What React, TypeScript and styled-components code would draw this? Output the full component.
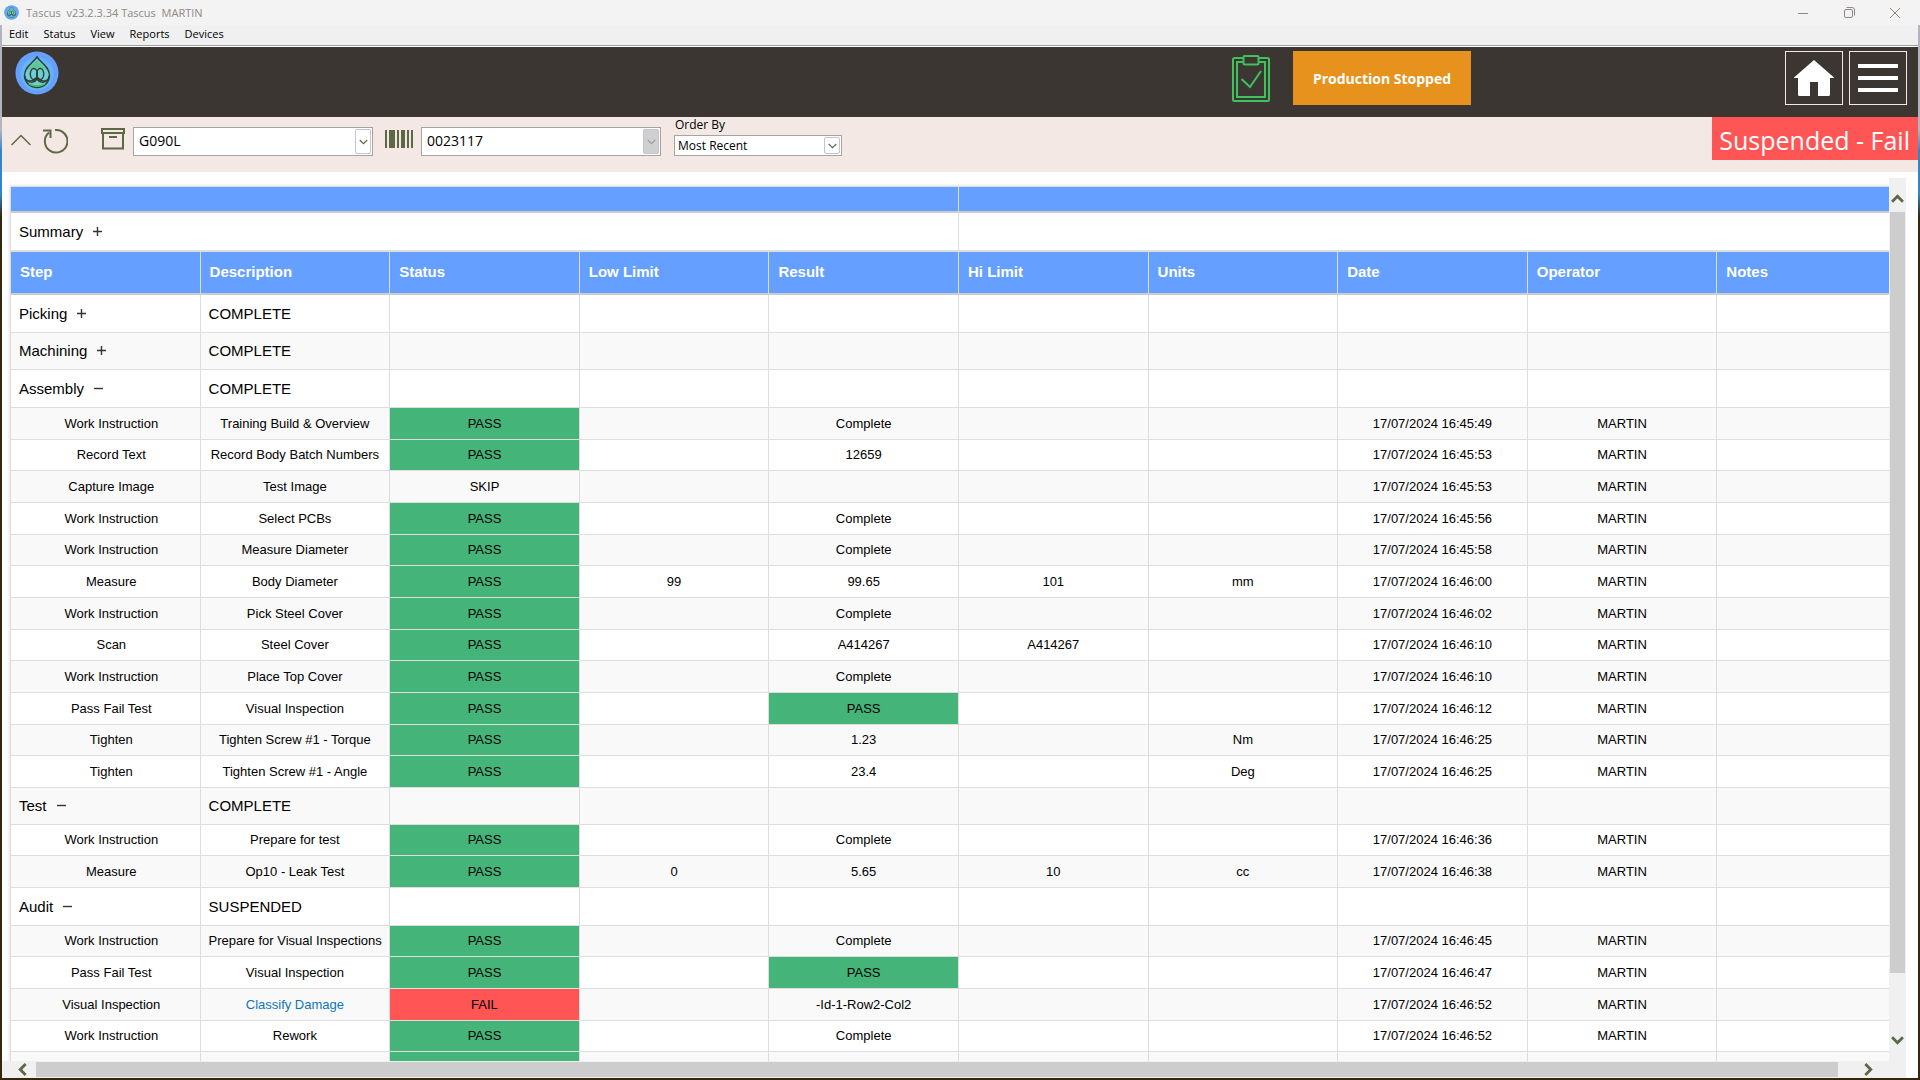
import React, { useState } from "react";
import styled, { createGlobalStyle, css } from "styled-components";

const ui = `"Open Sans", "Noto Sans", sans-serif`;
const grid = `"Liberation Sans", Arial, sans-serif`;
const olive = "#5d6846";

const GlobalStyle = createGlobalStyle`
  *, *::before, *::after { box-sizing: border-box; }
  html, body, #root { height: 100%; }
  body { margin: 0; overflow: hidden; background: #2f2710; font-family: ${ui}; color: #000; }
  button, select { font: inherit; color: inherit; }
`;

const Desktop = styled.div`
  height: 100vh;
  display: flex;
  flex-direction: column;
  background: linear-gradient(#b4b4c0 0 12%, #2f86c9 14% 18%, #33280c 20% 100%);
`;

const TitleBar = styled.header`
  flex: none;
  height: 25px;
  display: flex;
  align-items: center;
  justify-content: space-between;
  padding: 0 2px 0 4px;
  background: #f3f3f3;
`;

const Title = styled.h1`
  margin: 0;
  display: flex;
  align-items: center;
  gap: 7px;
  font-size: 11px;
  line-height: 16px;
  font-weight: 400;
  color: #8f8981;
  white-space: pre;
`;

const WindowButtons = styled.div`
  display: flex;
`;

const WindowButton = styled.button`
  width: 46px;
  height: 22px;
  padding: 0;
  border: 0;
  background: none;
  display: grid;
  place-items: center;
  color: #8f8981;
`;

const Window = styled.div`
  flex: 1;
  min-height: 0;
  margin: 0 2px 2px;
  display: flex;
  flex-direction: column;
  background: #fff;
`;

const MenuBar = styled.nav`
  flex: none;
  height: 21px;
  display: flex;
  align-items: flex-start;
  gap: 15px;
  margin-bottom: 1px;
  padding-left: 7px;
  background: #f0f0f0;
  border-bottom: 1px solid #a0a0a0;
`;

const MenuItem = styled.button`
  padding: 0;
  border: 0;
  background: none;
  font-size: 11px;
  line-height: 18px;
`;

const Banner = styled.div`
  flex: none;
  height: 70px;
  display: flex;
  align-items: flex-start;
  gap: 6px;
  padding: 4px 11px 0 13px;
  background: #3c3633;
`;

const BannerStatus = styled.div`
  flex: 1;
  display: flex;
  align-items: center;
  justify-content: flex-end;
  gap: 22px;
  padding-right: 308px;
`;

const StopButton = styled.button`
  width: 178px;
  height: 54px;
  padding: 0;
  border: 0;
  background: #e8921e;
  color: #fff;
  font-size: 14px;
  font-weight: 700;
`;

const SquareButton = styled.button`
  width: 58px;
  height: 54px;
  padding: 0;
  border: 1px solid #f3e8e3;
  background: none;
  display: grid;
  place-items: center;
`;

const Filters = styled.div`
  flex: none;
  height: 55px;
  display: flex;
  align-items: flex-start;
  background: #f3e8e3;
`;

const ToolButton = styled.button`
  padding: 0;
  border: 0;
  background: none;
  display: block;
`;

const Tools = styled.div`
  display: flex;
  gap: 11px;
  padding: 11px 0 0 9px;
`;

const Field = styled.div<{ $lead: number }>`
  display: flex;
  gap: 8px;
  padding: 10px 0 0 ${(p) => p.$lead}px;
`;

const Stack = styled.div`
  display: flex;
  flex-direction: column;
  padding-left: 13px;
`;

const SmallLabel = styled.label`
  padding: 0 1px 2px;
  font-size: 12px;
  line-height: 16px;
`;

const Combo = styled.div<{ $small?: boolean }>`
  width: ${(p) => (p.$small ? 168 : 240)}px;
  height: ${(p) => (p.$small ? 21 : 29)}px;
  display: grid;
  grid-template-columns: 1fr 16px;
  align-items: center;
  padding: 1px;
  background: #fff;
  border: 1px solid #a4a4a8;
`;

const Select = styled.select<{ $small?: boolean }>`
  grid-area: 1 / 1 / 2 / 3;
  width: 100%;
  height: 100%;
  padding: 0 0 ${(p) => (p.$small ? 0 : 2)}px ${(p) => (p.$small ? 2 : 4)}px;
  border: 0;
  background: none;
  appearance: none;
  font-size: ${(p) => (p.$small ? 12 : 14)}px;
  line-height: 16px;
  color: #000;
`;

const Arrow = styled.span<{ $off?: boolean }>`
  grid-area: 1 / 2 / 2 / 3;
  height: 100%;
  display: grid;
  place-items: center;
  pointer-events: none;
  border: 1px solid #c4c4cc;
  border-radius: 2px;
  background: ${(p) => (p.$off ? "#cfcfcf" : "#fff")};
  color: ${(p) => (p.$off ? "#9c9ca4" : olive)};
`;

const Verdict = styled.output`
  margin-left: auto;
  height: 43px;
  padding: 0 8px 0 7px;
  background: #ff5555;
  color: #fff;
  font-size: 25px;
  line-height: 46px;
  white-space: nowrap;
`;

const Body = styled.main`
  flex: 1;
  min-height: 0;
  display: grid;
  grid-template-columns: 1fr 17px;
  grid-template-rows: 1fr 17px;
  padding: 6px 12px 0 0;
`;

const Viewport = styled.div`
  overflow: hidden;
  padding: 8px 0 0 8px;
  font-family: ${grid};
`;

const Table = styled.table`
  width: calc(100% + 18px);
  table-layout: fixed;
  border-collapse: separate;
  border-spacing: 0;
  border-left: 1px solid #ddd;
  border-top: 1px solid #ddd;
  box-shadow: 0 0 4px rgba(0, 0, 0, 0.16);
`;

const fill = { pass: "#45b478", fail: "#ff5555" };

const Head = styled.th`
  height: 43px;
  padding: 0 9px 2px;
  background: #659fff;
  border-right: 1px solid #ddd;
  border-bottom: 2px solid #ccc;
  color: #fff;
  font-size: 15px;
  line-height: 18px;
  font-weight: 700;
  text-align: left;
`;

const CapHead = styled(Head).attrs({ as: "td" })`
  height: 26px;
`;

const SummaryCell = styled.td`
  height: 39px;
  padding: 0 8px;
  background: #fff;
  border-right: 1px solid #ddd;
  border-bottom: 2px solid #ddd;
`;

const Cell = styled.td<{ $fill?: "pass" | "fail" }>`
  padding: 0 8px;
  border-right: 1px solid #ddd;
  border-bottom: 1px solid #ddd;
  white-space: nowrap;
  ${(p) => p.$fill && css`background: ${fill[p.$fill]};`}
`;

const Rows = styled.tbody`
  tr { background: #fff; }
  tr:nth-child(even) { background: #f9f9f9; }
`;

const SectionRow = styled.tr`
  height: 38px;
  font-size: 15px;
  line-height: 18px;
  &:nth-child(even) { height: 37px; }
`;

const StepRow = styled.tr`
  height: 32px;
  font-size: 13px;
  line-height: 16px;
  text-align: center;
  &:nth-child(3n + 2) { height: 31px; }
`;

const IndentCell = styled(Cell)`
  padding-left: 20px;
`;

const Toggle = styled.button`
  display: flex;
  align-items: center;
  gap: 10px;
  padding: 0;
  border: 0;
  background: none;
  font-family: ${grid};
  font-size: 15px;
  line-height: 18px;
`;

const DamageLink = styled.a`
  color: #0f75bc;
  text-decoration: none;
`;

const Bar = styled.div<{ $across?: boolean }>`
  display: flex;
  flex-direction: ${(p) => (p.$across ? "row" : "column")};
  background: #f0f0f0;
  padding: ${(p) => (p.$across ? "1px 0" : "0 1px")};
`;

const BarArrow = styled.button<{ $edge: "top" | "bottom" | "left" | "right" }>`
  flex: 0 0 34px;
  padding: 0;
  padding-${(p) => p.$edge}: 9px;
  border: 0;
  background: none;
  display: grid;
  place-items: center;
`;

const Thumb = styled.div<{ $share: number }>`
  flex: ${(p) => p.$share} 0 0;
  background: #cdcdcd;
`;

const Rest = styled.div<{ $share: number }>`
  flex: ${(p) => p.$share} 0 0;
`;

function Logo({ size }: { size: number }) {
  return (
    <svg width={size} height={size} viewBox="0 0 44 44" aria-hidden="true">
      <circle cx="22" cy="22" r="21.5" fill="#659fff" />
      <circle cx="22" cy="23" r="16.5" fill="#66b4f4" />
      <path d="M22 6C18 12 9.500 16 9.500 24.500a12.500 12 0 0 0 25 0C34.500 16 26 12 22 6Z" fill="#70cfd0" stroke="#30403a" strokeWidth="1.500" />
      <path d="M22 9c-3 4-7 6-9 10 4-2 14-2 18 0-2-4-6-6-9-10Z" fill="#4cc46e" opacity="0.6" />
      <g fill="none" stroke="#30403a" strokeWidth="1.500">
        <ellipse cx="18.800" cy="23" rx="3.500" ry="5.500" />
        <ellipse cx="25.200" cy="23" rx="3.500" ry="5.500" />
        <path d="M10 25c0 6 8 7 12 1c4 6 12 5 12-1" />
        <path d="M11 29c5 4 9 2 11-1c2 3 6 5 11 1" />
      </g>
      <path d="M14 33q8 4 16 0" fill="none" stroke="#43c05c" strokeWidth="1.500" />
    </svg>
  );
}

function Chevron({ turn, thick }: { turn: number; thick?: boolean }) {
  return (
    <svg width={thick ? 13 : 9} height={thick ? 13 : 9} viewBox="0 0 12 12" aria-hidden="true">
      <path
        d="M1 4l5 5 5-5"
        fill="none"
        stroke={thick ? olive : "currentColor"}
        strokeWidth={thick ? 2.600 : 1.500}
        transform={`rotate(${turn} 6 6)`}
      />
    </svg>
  );
}

function Sign({ open }: { open: boolean }) {
  return (
    <svg width="10" height="10" viewBox="0 0 10 10" aria-hidden="true">
      <path d={open ? "M0 4.500h9" : "M0 4.500h9M4.500 0v9"} stroke="#333" strokeWidth="1.400" fill="none" />
    </svg>
  );
}

type Step = {
  step: string;
  text: string;
  status: string;
  low?: string;
  result?: string;
  high?: string;
  units?: string;
  time: string;
};
type Section = { name: string; state: string; open: boolean; steps: Step[] };

const wi = (text: string, time: string): Step => ({ step: "Work Instruction", text, status: "PASS", result: "Complete", time });

const data: Section[] = [
  { name: "Picking", state: "COMPLETE", open: false, steps: [] },
  { name: "Machining", state: "COMPLETE", open: false, steps: [] },
  {
    name: "Assembly",
    state: "COMPLETE",
    open: true,
    steps: [
      wi("Training Build & Overview", "16:45:49"),
      { step: "Record Text", text: "Record Body Batch Numbers", status: "PASS", result: "12659", time: "16:45:53" },
      { step: "Capture Image", text: "Test Image", status: "SKIP", time: "16:45:53" },
      wi("Select PCBs", "16:45:56"),
      wi("Measure Diameter", "16:45:58"),
      { step: "Measure", text: "Body Diameter", status: "PASS", low: "99", result: "99.65", high: "101", units: "mm", time: "16:46:00" },
      wi("Pick Steel Cover", "16:46:02"),
      { step: "Scan", text: "Steel Cover", status: "PASS", result: "A414267", high: "A414267", time: "16:46:10" },
      wi("Place Top Cover", "16:46:10"),
      { step: "Pass Fail Test", text: "Visual Inspection", status: "PASS", result: "PASS", time: "16:46:12" },
      { step: "Tighten", text: "Tighten Screw #1 - Torque", status: "PASS", result: "1.23", units: "Nm", time: "16:46:25" },
      { step: "Tighten", text: "Tighten Screw #1 - Angle", status: "PASS", result: "23.4", units: "Deg", time: "16:46:25" },
    ],
  },
  {
    name: "Test",
    state: "COMPLETE",
    open: true,
    steps: [
      wi("Prepare for test", "16:46:36"),
      { step: "Measure", text: "Op10 - Leak Test", status: "PASS", low: "0", result: "5.65", high: "10", units: "cc", time: "16:46:38" },
    ],
  },
  {
    name: "Audit",
    state: "SUSPENDED",
    open: true,
    steps: [
      wi("Prepare for Visual Inspections", "16:46:45"),
      { step: "Pass Fail Test", text: "Visual Inspection", status: "PASS", result: "PASS", time: "16:46:47" },
      { step: "Visual Inspection", text: "Classify Damage", status: "FAIL", result: "-Id-1-Row2-Col2", time: "16:46:52" },
      wi("Rework", "16:46:52"),
      { step: "", text: "", status: "PASS", time: "" },
    ],
  },
];

const columns = ["Step", "Description", "Status", "Low Limit", "Result", "Hi Limit", "Units", "Date", "Operator", "Notes"];

const tone = (value?: string) => (value === "PASS" ? "pass" : value === "FAIL" ? "fail" : undefined);

function StepLine({ item }: { item: Step }) {
  return (
    <StepRow>
      <IndentCell>{item.step}</IndentCell>
      <Cell>{item.status === "FAIL" ? <DamageLink href="#damage">{item.text}</DamageLink> : item.text}</Cell>
      <Cell $fill={tone(item.status)}>{item.time && item.status}</Cell>
      <Cell>{item.low}</Cell>
      <Cell $fill={tone(item.result)}>{item.result}</Cell>
      <Cell>{item.high}</Cell>
      <Cell>{item.units}</Cell>
      <Cell>{item.time && `17/07/2024 ${item.time}`}</Cell>
      <Cell>{item.time && "MARTIN"}</Cell>
      <Cell />
    </StepRow>
  );
}

export default function App() {
  const [open, setOpen] = useState<Record<string, boolean>>(
    Object.fromEntries(data.map((s) => [s.name, s.open]))
  );

  return (
    <>
      <GlobalStyle />
      <Desktop>
        <TitleBar>
          <Title>
            <Logo size={15} />
            {"Tascus  v23.2.3.34 Tascus  MARTIN"}
          </Title>
          <WindowButtons>
            <WindowButton aria-label="Minimise">
              <svg width="10" height="10"><path d="M0 5.500h10" stroke="currentColor" /></svg>
            </WindowButton>
            <WindowButton aria-label="Restore">
              <svg width="11" height="11" fill="none" stroke="currentColor">
                <rect x="0.500" y="2.500" width="8" height="8" rx="1.500" />
                <path d="M2.500 .5h5.500a2.500 2.500 0 0 1 2.500 2.500v5.500" />
              </svg>
            </WindowButton>
            <WindowButton aria-label="Close">
              <svg width="10" height="10"><path d="M0 0l10 10M10 0L0 10" stroke="currentColor" /></svg>
            </WindowButton>
          </WindowButtons>
        </TitleBar>
        <Window>
          <MenuBar>
            {["Edit", "Status", "View", "Reports", "Devices"].map((m) => (
              <MenuItem key={m}>{m}</MenuItem>
            ))}
          </MenuBar>
          <Banner>
            <Logo size={44} />
            <BannerStatus>
              <svg width="40" height="48" viewBox="0 0 40 48" fill="none" stroke="#3fc15c" strokeWidth="2" aria-hidden="true">
                <path d="M12 4H3.500A1.500 1.500 0 0 0 2 5.500v40A1.500 1.500 0 0 0 3.500 47h33a1.500 1.500 0 0 0 1.500-1.500v-40A1.500 1.500 0 0 0 36.500 4H28" />
                <path d="M12 8H6v35h28V8h-6" />
                <rect x="12.500" y="2" width="15" height="8.500" rx="1" />
                <path d="M10.500 25l8.500 8 11-16" />
              </svg>
              <StopButton>Production Stopped</StopButton>
            </BannerStatus>
            <SquareButton aria-label="Home">
              <svg width="40" height="36" viewBox="0 0 40 36" fill="#fff">
                <path d="M20 0l20 17.500v.5h-4v16.500a1.500 1.500 0 0 1-1.500 1.500H24V22h-8v14H5.500A1.500 1.500 0 0 1 4 34.500V18H0v-.5Z" />
              </svg>
            </SquareButton>
            <SquareButton aria-label="Menu">
              <svg width="40" height="28" viewBox="0 0 40 28" fill="#fff">
                <path d="M0 0h40v4H0zM0 12h40v4H0zM0 24h40v4H0z" />
              </svg>
            </SquareButton>
          </Banner>
          <Filters>
            <Tools>
              <ToolButton aria-label="Collapse">
                <svg width="20" height="20" fill="none" stroke={olive} strokeWidth="1.500"><path d="M.5 14L10 4.500l9.500 9.500" /></svg>
              </ToolButton>
              <ToolButton aria-label="Refresh">
                <svg width="26" height="26" fill="none" stroke={olive} strokeWidth="2">
                  <path d="M13 2A11.300 11.300 0 1 1 7 4.500M1 2.500h7.500V10" />
                </svg>
              </ToolButton>
            </Tools>
            <Field $lead={33}>
              <svg width="24" height="24" fill="none" stroke={olive} strokeWidth="2" aria-hidden="true">
                <path d="M1 2h22v4H1zM2 6h20v15.500H2zM8 10h8" />
              </svg>
              <Combo>
                <Select aria-label="Product"><option>G090L</option></Select>
                <Arrow><Chevron turn={0} /></Arrow>
              </Combo>
            </Field>
            <Field $lead={12}>
              <svg width="28" height="24" fill={olive} aria-hidden="true">
                <path d="M0 3h2v18H0zM4 3h6v18H4zM12 3h2v18h-2zM16 3h4v18h-4zM22 3h2v18h-2zM26 3h2v18h-2z" />
              </svg>
              <Combo>
                <Select aria-label="Serial number"><option>0023117</option></Select>
                <Arrow $off><Chevron turn={0} /></Arrow>
              </Combo>
            </Field>
            <Stack>
              <SmallLabel htmlFor="order">Order By</SmallLabel>
              <Combo $small>
                <Select id="order" $small><option>Most Recent</option></Select>
                <Arrow><Chevron turn={0} /></Arrow>
              </Combo>
            </Stack>
            <Verdict>Suspended - Fail</Verdict>
          </Filters>
          <Body>
            <Viewport>
              <Table>
                <thead>
                  <tr>
                    <CapHead colSpan={5} />
                    <CapHead colSpan={5} />
                  </tr>
                  <tr>
                    <SummaryCell colSpan={5}>
                      <Toggle>Summary <Sign open={false} /></Toggle>
                    </SummaryCell>
                    <SummaryCell colSpan={5} />
                  </tr>
                  <tr>{columns.map((c) => <Head key={c} scope="col">{c}</Head>)}</tr>
                </thead>
                <Rows>
                  {data.map((s) => (
                    <React.Fragment key={s.name}>
                      <SectionRow>
                        <Cell>
                          <Toggle
                            aria-expanded={open[s.name]}
                            onClick={() => setOpen({ ...open, [s.name]: !open[s.name] })}
                          >
                            {s.name} <Sign open={open[s.name]} />
                          </Toggle>
                        </Cell>
                        <Cell>{s.state}</Cell>
                        {columns.slice(2).map((c) => <Cell key={c} />)}
                      </SectionRow>
                      {open[s.name] && s.steps.map((item, i) => <StepLine key={i} item={item} />)}
                    </React.Fragment>
                  ))}
                </Rows>
              </Table>
            </Viewport>
            <Bar>
              <BarArrow $edge="top" aria-label="Scroll up"><Chevron turn={180} thick /></BarArrow>
              <Thumb $share={760} />
              <Rest $share={54} />
              <BarArrow $edge="bottom" aria-label="Scroll down"><Chevron turn={0} thick /></BarArrow>
            </Bar>
            <Bar $across>
              <BarArrow $edge="left" aria-label="Scroll left"><Chevron turn={90} thick /></BarArrow>
              <Thumb $share={1802} />
              <Rest $share={17} />
              <BarArrow $edge="right" aria-label="Scroll right"><Chevron turn={270} thick /></BarArrow>
            </Bar>
            <Bar />
          </Body>
        </Window>
      </Desktop>
    </>
  );
}
